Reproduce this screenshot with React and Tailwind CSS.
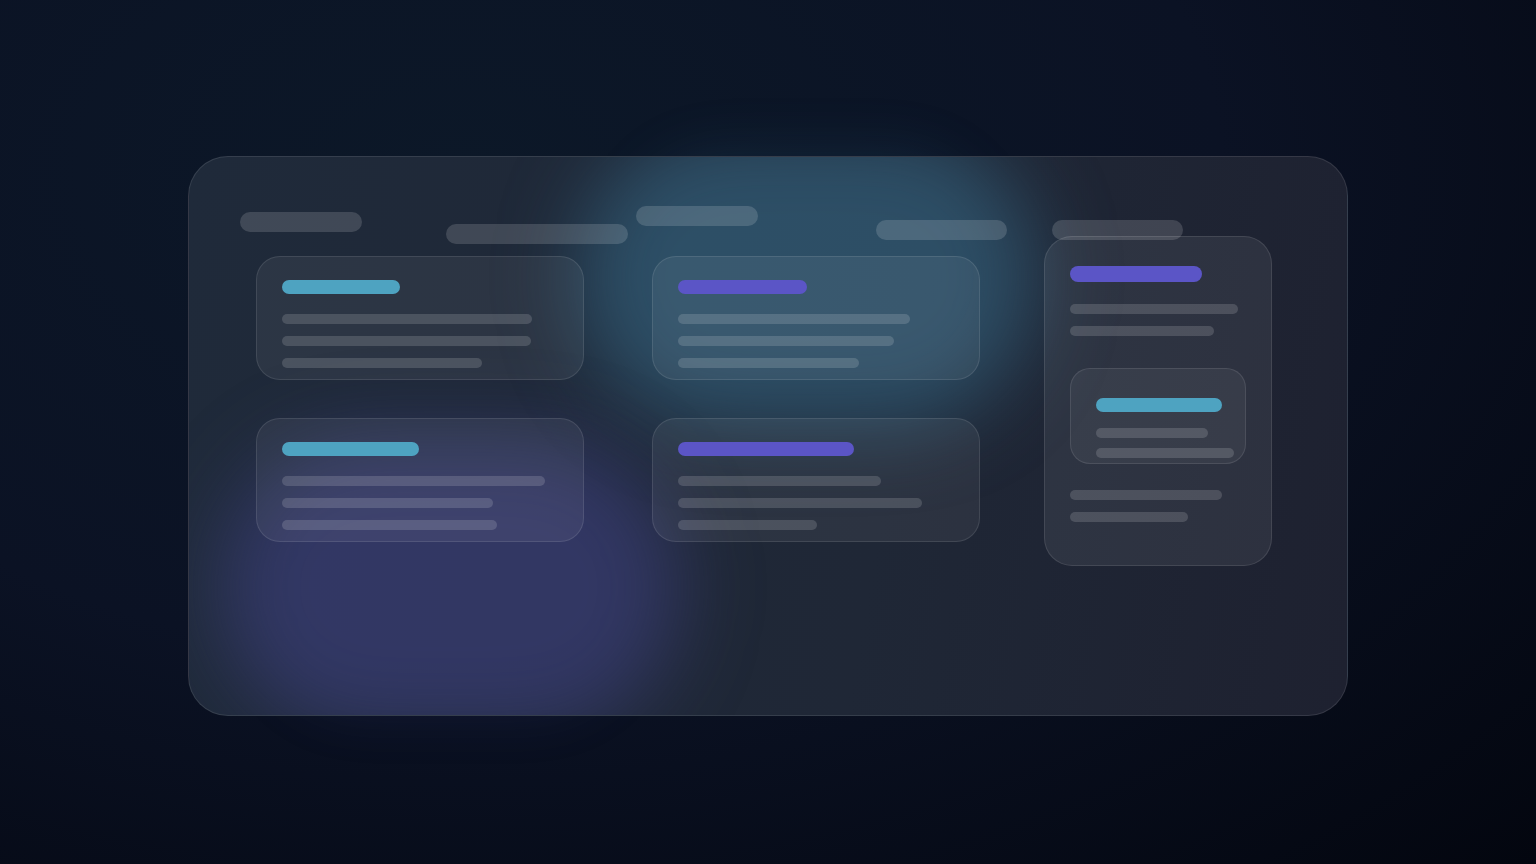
import React from 'react';

const cyan = 'bg-[#4ea3c1]';
const purple = 'bg-[#5b55c6]';

function Line({ w, className = '' }) {
  return <div className={`h-[10px] rounded-full bg-white/15 ${className}`} style={{ width: w }} />;
}

function Card({ accent, accentW, lines }) {
  return (
    <div className="w-[328px] h-[124px] rounded-[24px] border border-white/10 bg-white/[0.06] pt-[23px] pl-[25px]">
      <div className={`h-[14px] rounded-full ${accent}`} style={{ width: accentW }} />
      <div className="mt-[20px] flex flex-col gap-[12px]">
        {lines.map((w, i) => (
          <Line key={i} w={w} />
        ))}
      </div>
    </div>
  );
}

export default function App() {
  return (
    <div className="relative w-full h-[864px] overflow-hidden bg-[radial-gradient(ellipse_at_30%_20%,#0c1828_0%,#0b1224_50%,#03060f_100%)] flex items-start justify-center">
      <div className="relative mt-[156px] w-[1160px] h-[560px]">
        {/* faint glow spilling past the panel */}
        <div className="absolute left-[430px] top-[-10px] w-[380px] h-[220px] rounded-full bg-[#2f6a8c]/15 blur-[24px]" />
        <div className="absolute left-[70px] top-[340px] w-[380px] h-[220px] rounded-full bg-[#3a3a90]/15 blur-[24px]" />

        <div className="relative w-full h-full rounded-[40px] border border-white/10 bg-[linear-gradient(100deg,#1f2a3a_0%,#1f2736_60%,#1e2130_100%)] overflow-hidden">
          {/* glow blobs */}
          <div className="absolute left-[388px] top-[-30px] w-[460px] h-[300px] rounded-full bg-[#3f7fa0]/45 blur-[40px]" />
          <div className="absolute left-[30px] top-[280px] w-[460px] h-[300px] rounded-full bg-[#4a4a98]/45 blur-[40px]" />

          <div className="relative pt-[49px] pl-[51px]">
            {/* top pills */}
            <div className="flex items-start h-[38px]">
              <div className="mt-[6px] w-[122px] h-[20px] rounded-full bg-white/15" />
              <div className="ml-[84px] mt-[18px] w-[182px] h-[20px] rounded-full bg-white/15" />
              <div className="ml-[8px] w-[122px] h-[20px] rounded-full bg-white/15" />
              <div className="ml-[118px] mt-[14px] w-[131px] h-[20px] rounded-full bg-white/15" />
              <div className="ml-[45px] mt-[14px] w-[131px] h-[20px] rounded-full bg-white/15" />
            </div>

            <div className="mt-[12px] ml-[16px] flex items-start">
              <div className="flex flex-col gap-[38px]">
                <Card accent={cyan} accentW={118} lines={[250, 249, 200]} />
                <Card accent={cyan} accentW={137} lines={[263, 211, 215]} />
              </div>
              <div className="ml-[68px] flex flex-col gap-[38px]">
                <Card accent={purple} accentW={129} lines={[232, 216, 181]} />
                <Card accent={purple} accentW={176} lines={[203, 244, 139]} />
              </div>
              <div className="ml-[64px] -mt-[20px] w-[228px] h-[330px] rounded-[28px] border border-white/10 bg-white/[0.07] pt-[29px] pl-[25px]">
                <div className={`w-[132px] h-[16px] rounded-full ${purple}`} />
                <div className="mt-[22px] flex flex-col gap-[12px]">
                  <Line w={168} />
                  <Line w={144} />
                </div>
                <div className="mt-[32px] w-[176px] h-[96px] rounded-[20px] border border-white/10 bg-white/[0.05] pt-[29px] pl-[25px] overflow-hidden">
                  <div className={`w-[126px] h-[14px] rounded-full ${cyan}`} />
                  <div className="mt-[16px] flex flex-col gap-[10px]">
                    <Line w={112} />
                    <Line w={138} />
                  </div>
                </div>
                <div className="mt-[26px] flex flex-col gap-[12px]">
                  <Line w={152} />
                  <Line w={118} />
                </div>
              </div>
            </div>
          </div>
        </div>
      </div>
    </div>
  );
}
